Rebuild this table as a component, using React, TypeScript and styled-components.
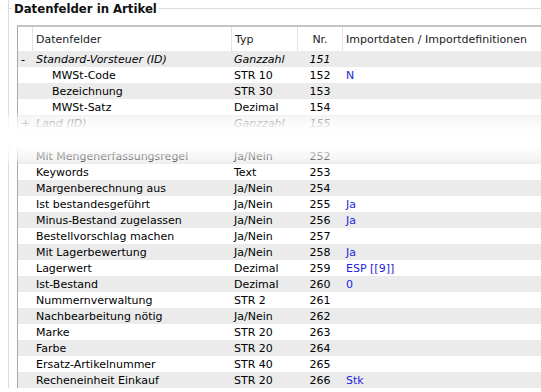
import React from 'react';
import styled, { createGlobalStyle } from 'styled-components';

const GlobalStyle = createGlobalStyle`
  html, body {
    margin: 0;
    padding: 0;
    background: #fff;
    overflow: hidden;
  }
  body {
    font-family: "DejaVu Sans", Verdana, sans-serif;
    font-size: 11px;
    color: #000;
  }
`;

const Page = styled.div`
  position: relative;
  width: 560px;
  height: 392px;
  overflow: hidden;
`;

// fieldset-like frame with the title sitting on the top line
const Frame = styled.div`
  margin: 8px 0 0 8px;
  border-left: 1px solid #dcdcdc;
`;

const TitleRow = styled.div`
  display: flex;
  align-items: center;
  height: 16px;
  margin-top: -8px;
  margin-left: -1px;
`;

const Rule = styled.div<{ $grow?: boolean }>`
  border-top: 1px solid #dcdcdc;
  width: 4px;
  flex: ${(p) => (p.$grow ? 1 : 'none')};
`;

const Title = styled.h3`
  margin: 0;
  padding: 1px 2px 0;
  font-family: "DejaVu Sans Condensed", "DejaVu Sans", sans-serif;
  font-size: 13px;
  line-height: 16px;
  font-weight: bold;
  color: #111;
`;

const Body = styled.div`
  padding: 10px 0 0 8px;
`;

const Table = styled.div`
  border-left: 1px solid #a8a8a8;
  border-top: 2px solid #c4c4c4;
  margin-top: -1px;
`;

const cols = '14px 199px 66px 45px 1fr';

const Head = styled.div`
  display: grid;
  grid-template-columns: ${cols};
  height: 24px;
  color: #222;
`;

const HeadCell = styled.div<{ $center?: boolean; $first?: boolean }>`
  display: flex;
  align-items: center;
  justify-content: ${(p) => (p.$center ? 'center' : 'flex-start')};
  padding-left: ${(p) => (p.$center ? '0' : '3px')};
  border-left: ${(p) => (p.$first ? 'none' : '1px solid #e2e2e2')};
  white-space: nowrap;
`;

const Row = styled.div<{ $shade?: boolean; $italic?: boolean }>`
  display: grid;
  grid-template-columns: ${cols};
  height: 16px;
  line-height: 17px;
  background: ${(p) => (p.$shade ? '#ebebeb' : '#fff')};
  font-style: ${(p) => (p.$italic ? 'italic' : 'normal')};
  white-space: nowrap;
`;

const Gap = styled.div`
  height: 17px;
`;

const Toggle = styled.div`
  padding-left: 3px;
`;

const Name = styled.div<{ $child?: boolean }>`
  padding-left: ${(p) => (p.$child ? '20px' : '4px')};
`;

const Type = styled.div`
  padding-left: 3px;
`;

const Nr = styled.div`
  text-align: center;
  padding-left: 1px;
`;

const Import = styled.div`
  padding-left: 4px;
  color: #2424d8;
`;

// torn-off effect between the two parts of the list
const Fade = styled.div`
  position: absolute;
  left: 0;
  right: 0;
  top: 112px;
  height: 56px;
  pointer-events: none;
  background: linear-gradient(
    to bottom,
    rgba(255, 255, 255, 0) 0px,
    rgba(255, 255, 255, 0.55) 5px,
    rgba(255, 255, 255, 0.82) 12px,
    #fff 19px,
    #fff 34px,
    rgba(255, 255, 255, 0.75) 40px,
    rgba(255, 255, 255, 0.55) 46px,
    rgba(255, 255, 255, 0) 54px
  );
`;

type Field = {
  toggle?: string;
  name: string;
  type: string;
  nr: number;
  imp?: string;
  child?: boolean;
  italic?: boolean;
};

const top: Field[] = [
  { toggle: '-', name: 'Standard-Vorsteuer (ID)', type: 'Ganzzahl', nr: 151, italic: true },
  { name: 'MWSt-Code', type: 'STR 10', nr: 152, imp: 'N', child: true },
  { name: 'Bezeichnung', type: 'STR 30', nr: 153, child: true },
  { name: 'MWSt-Satz', type: 'Dezimal', nr: 154, child: true },
  { toggle: '+', name: 'Land (ID)', type: 'Ganzzahl', nr: 155, italic: true },
];

const bottom: Field[] = [
  { name: 'Mit Mengenerfassungsregel', type: 'Ja/Nein', nr: 252 },
  { name: 'Keywords', type: 'Text', nr: 253 },
  { name: 'Margenberechnung aus', type: 'Ja/Nein', nr: 254 },
  { name: 'Ist bestandesgeführt', type: 'Ja/Nein', nr: 255, imp: 'Ja' },
  { name: 'Minus-Bestand zugelassen', type: 'Ja/Nein', nr: 256, imp: 'Ja' },
  { name: 'Bestellvorschlag machen', type: 'Ja/Nein', nr: 257 },
  { name: 'Mit Lagerbewertung', type: 'Ja/Nein', nr: 258, imp: 'Ja' },
  { name: 'Lagerwert', type: 'Dezimal', nr: 259, imp: 'ESP [[9]]' },
  { name: 'Ist-Bestand', type: 'Dezimal', nr: 260, imp: '0' },
  { name: 'Nummernverwaltung', type: 'STR 2', nr: 261 },
  { name: 'Nachbearbeitung nötig', type: 'Ja/Nein', nr: 262 },
  { name: 'Marke', type: 'STR 20', nr: 263 },
  { name: 'Farbe', type: 'STR 20', nr: 264 },
  { name: 'Ersatz-Artikelnummer', type: 'STR 40', nr: 265 },
  { name: 'Recheneinheit Einkauf', type: 'STR 20', nr: 266, imp: 'Stk' },
];

const FieldRow: React.FC<{ f: Field; shade: boolean }> = ({ f, shade }) => (
  <Row $shade={shade} $italic={f.italic}>
    <Toggle>{f.toggle}</Toggle>
    <Name $child={f.child}>{f.name}</Name>
    <Type>{f.type}</Type>
    <Nr>{f.nr}</Nr>
    <Import>{f.imp}</Import>
  </Row>
);

const App: React.FC = () => {
  return (
    <Page>
      <GlobalStyle />
      <Frame>
        <TitleRow>
          <Rule />
          <Title>Datenfelder in Artikel</Title>
          <Rule $grow />
        </TitleRow>
        <Body>
          <Table>
            <Head>
              <HeadCell $first />
              <HeadCell>Datenfelder</HeadCell>
              <HeadCell>Typ</HeadCell>
              <HeadCell $center>Nr.</HeadCell>
              <HeadCell>Importdaten / Importdefinitionen</HeadCell>
            </Head>
            {top.map((f, i) => (
              <FieldRow key={f.nr} f={f} shade={i % 2 === 0} />
            ))}
            <Gap />
            {bottom.map((f, i) => (
              <FieldRow key={f.nr} f={f} shade={i % 2 === 0} />
            ))}
          </Table>
        </Body>
      </Frame>
      <Fade />
    </Page>
  );
};

export default App;
